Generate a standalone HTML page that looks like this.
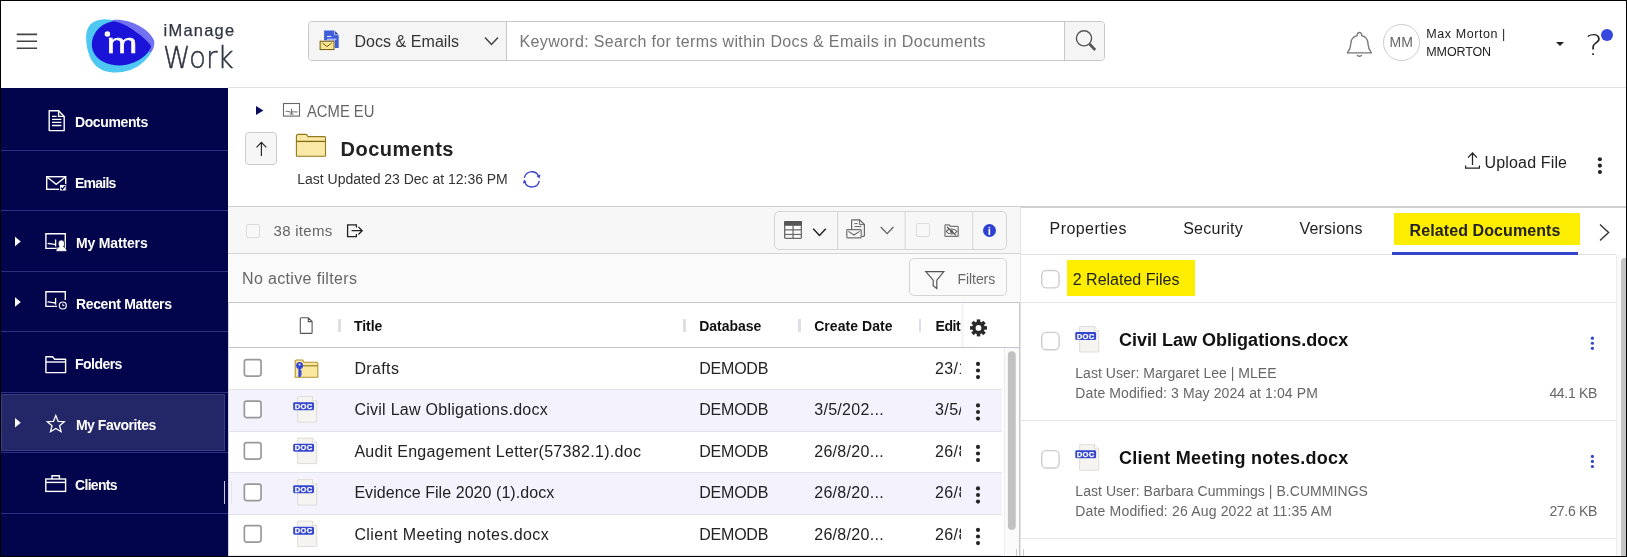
<!DOCTYPE html>
<html lang="en"><head><meta charset="utf-8"><title>iManage Work - Documents</title><style>
html,body{margin:0;padding:0;background:#fff;}
body{width:1627px;height:557px;overflow:hidden;position:relative;font-family:"Liberation Sans",sans-serif;}
#app{position:absolute;left:0;top:0;width:1627px;height:557px;overflow:hidden;background:#fff;}
.t{position:absolute;white-space:nowrap;line-height:1;}
#app{will-change:transform;}
#frame{position:absolute;left:0;top:0;width:1625px;height:555px;border:1px solid #000;pointer-events:none;}
</style></head><body><div id="app">
<div style="position:absolute;left:1px;top:1px;width:1625px;height:86px;background:#fff;"></div>
<div style="position:absolute;left:228px;top:87px;width:1398px;height:1px;background:#e2e2e2;"></div>
<svg style="position:absolute;left:14px;top:30px;" width="26" height="22" viewBox="0 0 26 22"><path d="M2.7 4.4 H23.1 M2.7 11.3 H23.1 M2.7 18.2 H23.1" stroke="#444" stroke-width="1.6" fill="none"/></svg>
<svg style="position:absolute;left:80px;top:12px;" width="84" height="68" viewBox="0 0 84 68"><path d="M6.11,25.64 C5.86,14.65 12.21,7.57 24.42,7.33 C39.07,7.08 63.49,18.32 73.26,30.53 C74.48,40.29 63.49,53.72 48.84,58.61 C36.63,62.27 21.98,61.05 14.65,52.50 C8.55,45.18 6.35,35.41 6.11,25.64 Z" fill="#4fc7f3"/><path d="M32.72,8.06 C48.84,6.35 68.38,15.87 74.11,28.69 C74.97,33.21 73.26,37.24 70.57,40.90 L32.72,9.52 Z" fill="#7271f1"/><path d="M11.84,32.36 C11.60,23.20 18.32,12.21 32.72,9.16 C41.51,9.52 52.50,16.85 61.05,23.81 C65.93,27.84 69.60,31.50 71.18,34.55 C68.38,42.74 58.61,50.31 46.40,52.75 C34.19,54.95 21.98,51.28 15.87,43.96 C12.82,40.29 11.97,36.63 11.84,32.36 Z" fill="#1b14d8"/><circle cx="27.4" cy="22" r="2.75" fill="#fff"/><text transform="translate(26.7,40.8) scale(1.31,1)" font-family="Liberation Sans, sans-serif" font-size="28" fill="#fff" stroke="#fff" stroke-width="0.45" stroke-linejoin="round">m</text></svg>
<span class="t" style="left:163.60px;top:22.00px;font-size:16.5px;color:#2f3542;letter-spacing:1.218px;-webkit-text-stroke:0.25px #2f3542;">iManage</span>
<span class="t" style="left:163.40px;top:43.00px;font-size:30px;color:#2f3542;font-family:'DejaVu Sans','Liberation Sans',sans-serif;font-weight:200;-webkit-text-stroke:0.45px #2f3542;transform:scaleX(0.928);transform-origin:0 0;">Work</span>
<div style="position:absolute;left:308px;top:21px;width:797.4px;height:40px;box-sizing:border-box;border:1px solid #c8c8c8;border-radius:4px;background:#fff;overflow:hidden;"><div style="position:absolute;left:0;top:0;width:196.5px;height:38px;background:#f5f5f5;border-right:1px solid #c8c8c8"></div><div style="position:absolute;left:755.4px;top:0;width:41px;height:38px;background:#f5f5f5;border-left:1px solid #c8c8c8"></div></div>
<svg style="position:absolute;left:319px;top:30px;" width="21" height="21" viewBox="0 0 21 21"><path d="M5.1 0.6 H15.6 L19.7 4.7 V18.1 H5.1Z" fill="#3f5dd8"/><path d="M15.6 0 V4.7 H20.3" fill="none" stroke="#fff" stroke-width="0.7"/><path d="M16 1.4 V4.3 H18.9Z" fill="#2b40b5"/><rect x="8" y="5.9" width="4.3" height="1.1" fill="#e4e9ff"/><rect x="8" y="8.7" width="9.4" height="1.1" fill="#c9d2ff"/><rect x="0.3" y="10.3" width="15.6" height="10.2" fill="#fff"/><rect x="1.1" y="11.2" width="13.9" height="8.4" fill="#fbe58e" stroke="#6b5410" stroke-width="1"/><path d="M3.4 13 L8 16.6 L12.7 13" fill="none" stroke="#6b5410" stroke-width="0.9"/></svg>
<span class="t" style="left:354.50px;top:34.00px;font-size:16px;color:#333;letter-spacing:0.040px;">Docs &amp; Emails</span>
<svg style="position:absolute;left:484px;top:36px;" width="15" height="10" viewBox="0 0 15 10"><path d="M1 1.5 L7.5 8.5 L14 1.5" fill="none" stroke="#444" stroke-width="1.5"/></svg>
<span class="t" style="left:519.50px;top:34.00px;font-size:16px;color:#757575;letter-spacing:0.354px;">Keyword: Search for terms within Docs &amp; Emails in Documents</span>
<svg style="position:absolute;left:1072px;top:26px;" width="28" height="28" viewBox="0 0 28 28"><circle cx="12" cy="12.3" r="7.6" fill="none" stroke="#555" stroke-width="1.4"/><path d="M17.6 18 L23.2 24" stroke="#555" stroke-width="2.6" stroke-linecap="butt"/></svg>
<svg style="position:absolute;left:1340px;top:25px;" width="40" height="37" viewBox="0 0 40 37"><path d="M7.4 27.8 C9.8 24.6 10.7 22.4 10.8 19 C10.9 14.6 12.6 11.6 17.2 10.6 C16.8 8.6 18 7.5 19.4 7.5 C20.8 7.5 22 8.6 21.6 10.6 C26.2 11.6 27.9 14.6 28 19 C28.1 22.4 29 24.6 31.4 27.8 Z" fill="none" stroke="#777" stroke-width="1.35" stroke-linejoin="round"/><path d="M17.4 30.5 Q19.4 31.9 21.4 30.5" fill="none" stroke="#777" stroke-width="1.4" stroke-linecap="round"/></svg>
<div style="position:absolute;left:1383px;top:24px;width:36.5px;height:36.5px;box-sizing:border-box;border:1px solid #ccc;border-radius:50%;background:#fff;"></div>
<span class="t" style="left:1389.60px;top:35.00px;font-size:14px;color:#666;letter-spacing:0.076px;">MM</span>
<span class="t" style="left:1426.30px;top:28.00px;font-size:12.5px;color:#222;letter-spacing:0.572px;">Max Morton |</span>
<span class="t" style="left:1426.30px;top:46.00px;font-size:12.5px;color:#222;letter-spacing:-0.118px;">MMORTON</span>
<svg style="position:absolute;left:1555px;top:41px;" width="10" height="6" viewBox="0 0 10 6"><path d="M1 1 H9 L5 5Z" fill="#222"/></svg>
<span class="t" style="left:1584.60px;top:32.00px;font-size:28px;color:#222;font-family:'DejaVu Sans','Liberation Sans',sans-serif;font-weight:200;transform:scaleX(1.2);transform-origin:0 0;">?</span>
<div style="position:absolute;left:1600.8px;top:29.4px;width:12px;height:12px;border-radius:50%;background:#3547dd;"></div>
<div style="position:absolute;left:1px;top:88px;width:227px;height:468px;background:#03054c;"></div>
<div style="position:absolute;left:1px;top:150px;width:227px;height:1px;background:#2d3080;"></div>
<div style="position:absolute;left:1px;top:210px;width:227px;height:1px;background:#2d3080;"></div>
<div style="position:absolute;left:1px;top:271px;width:227px;height:1px;background:#2d3080;"></div>
<div style="position:absolute;left:1px;top:331px;width:227px;height:1px;background:#2d3080;"></div>
<div style="position:absolute;left:1px;top:391.5px;width:227px;height:1px;background:#2d3080;"></div>
<div style="position:absolute;left:1px;top:452px;width:227px;height:1px;background:#2d3080;"></div>
<div style="position:absolute;left:1px;top:513px;width:227px;height:1px;background:#2d3080;"></div>
<div style="position:absolute;left:1px;top:394px;width:224px;height:57px;box-sizing:border-box;background:#242767;border:1px solid #393d80;"></div>
<div style="position:absolute;left:224px;top:481px;width:1px;height:23px;background:#c9c9d6;"></div>
<span class="t" style="left:74.90px;top:115.00px;font-size:14px;color:#fff;font-weight:700;letter-spacing:-0.367px;">Documents</span>
<span class="t" style="left:75.00px;top:176.00px;font-size:14px;color:#fff;font-weight:700;letter-spacing:-0.768px;">Emails</span>
<span class="t" style="left:75.90px;top:236.00px;font-size:14px;color:#fff;font-weight:700;letter-spacing:-0.148px;">My Matters</span>
<span class="t" style="left:75.90px;top:297.00px;font-size:14px;color:#fff;font-weight:700;letter-spacing:-0.328px;">Recent Matters</span>
<span class="t" style="left:75.00px;top:357.00px;font-size:14px;color:#fff;font-weight:700;letter-spacing:-0.528px;">Folders</span>
<span class="t" style="left:75.90px;top:418.00px;font-size:14px;color:#fff;font-weight:700;letter-spacing:-0.471px;">My Favorites</span>
<span class="t" style="left:75.00px;top:478.00px;font-size:14px;color:#fff;font-weight:700;letter-spacing:-0.679px;">Clients</span>
<svg style="position:absolute;left:15px;top:236px;" width="7" height="11" viewBox="0 0 7 11"><g transform="translate(0 0.5)"><path d="M0 0.3 L5.8 5 L0 9.7Z" fill="#fff"/></g></svg>
<svg style="position:absolute;left:15px;top:297px;" width="6" height="10" viewBox="0 0 6 10"><path d="M0 0.3 L5.8 5 L0 9.7Z" fill="#fff"/></svg>
<svg style="position:absolute;left:15px;top:417px;" width="7" height="11" viewBox="0 0 7 11"><g transform="translate(0 0.7)"><path d="M0 0.3 L5.8 5 L0 9.7Z" fill="#fff"/></g></svg>
<svg style="position:absolute;left:47px;top:109px;" width="20" height="24" viewBox="0 0 20 24"><path d="M2.2 1.8 H11.6 L17.2 7.4 V21.6 H2.2Z" fill="none" stroke="#fff" stroke-width="1.4" stroke-linejoin="round"/><path d="M11.6 1.8 V7.4 H17.2" fill="none" stroke="#fff" stroke-width="1.4"/><path d="M5 7.4 H9.6 M5 10.4 H14.4 M5 13.4 H14.4 M5 16.5 H14.4" stroke="#fff" stroke-width="1.3"/></svg>
<svg style="position:absolute;left:45px;top:175px;" width="24" height="17" viewBox="0 0 24 17"><rect x="1.7" y="1.7" width="19" height="12.6" fill="none" stroke="#fff" stroke-width="1.4"/><path d="M2 2 L11.2 9.4 L20.4 2" fill="none" stroke="#fff" stroke-width="1.4"/><rect x="14.6" y="9.4" width="6.6" height="6.6" fill="#fff" stroke="#03054c" stroke-width="1"/><path d="M16 12.6 L17.4 14.2 L20 10.8" fill="none" stroke="#03054c" stroke-width="1.2"/></svg>
<svg style="position:absolute;left:44px;top:232px;" width="24" height="20" viewBox="0 0 24 20"><path d="M1.9 1.7 H21.3 V16.4 H1.9Z" fill="none" stroke="#fff" stroke-width="1.4"/><path d="M3.6 11.6 C6.4 11 8.6 13 11.4 12.2 M11.6 7.6 V14.4" fill="none" stroke="#fff" stroke-width="1.3"/><path d="M12 19.4 C12.2 15.8 14.2 15.6 15.2 14.8 C13.6 12.6 14 8 17.4 8 C20.8 8 21.2 12.6 19.6 14.8 C20.6 15.6 22.6 15.8 22.8 19.4Z" fill="#fff" stroke="#03054c" stroke-width="0.7"/></svg>
<svg style="position:absolute;left:44px;top:290px;" width="24" height="21" viewBox="0 0 24 21"><path d="M21.3 10 V1.7 H1.9 V16.4 H13" fill="none" stroke="#fff" stroke-width="1.4"/><path d="M3.6 12 C6.4 11.4 8.6 13.4 11.4 12.6 M11.6 8 V14.8" fill="none" stroke="#fff" stroke-width="1.3"/><circle cx="18.8" cy="15.5" r="3.5" fill="#03054c" stroke="#fff" stroke-width="1.2"/><path d="M18.8 13.6 V15.7 H20.4" fill="none" stroke="#fff" stroke-width="1"/></svg>
<svg style="position:absolute;left:44px;top:355px;" width="24" height="20" viewBox="0 0 24 20"><path d="M1.9 17.6 V1.8 H8.6 L10.6 4.2 H21.6 V17.6Z" fill="none" stroke="#fff" stroke-width="1.4" stroke-linejoin="round"/><path d="M1.9 7 H21.6" fill="none" stroke="#fff" stroke-width="1.4"/></svg>
<svg style="position:absolute;left:45px;top:413px;" width="22" height="21" viewBox="0 0 22 21"><path transform="translate(10.8 10.9) scale(0.9) translate(-11 -10.9)" d="M11 1.6 L13.6 8 L20.4 8.5 L15.2 12.9 L16.9 19.6 L11 15.9 L5.1 19.6 L6.8 12.9 L1.6 8.5 L8.4 8Z" fill="none" stroke="#fff" stroke-width="1.4" stroke-linejoin="miter"/></svg>
<svg style="position:absolute;left:44px;top:474px;" width="24" height="19" viewBox="0 0 24 19"><rect x="1.8" y="5" width="19.8" height="12.4" fill="none" stroke="#fff" stroke-width="1.4"/><path d="M8 5 V1.8 H15.4 V5" fill="none" stroke="#fff" stroke-width="1.4"/><path d="M1.8 8.4 H21.6" fill="none" stroke="#fff" stroke-width="1.4"/></svg>
<svg style="position:absolute;left:255px;top:105px;" width="9" height="11" viewBox="0 0 9 11"><path d="M1 1 L8.4 5.5 L1 10Z" fill="#0b0b5e"/></svg>
<svg style="position:absolute;left:282px;top:102px;" width="19" height="16" viewBox="0 0 19 16"><rect x="1.5" y="1.5" width="16" height="12.6" fill="#fff" stroke="#666" stroke-width="1.1"/><path d="M3.6 9.4 C6 8.8 8 10.6 10 10 C12 9.4 13.6 10.4 15.6 9.8 M9.6 6.6 V12 M7.8 12.1 H11.6" fill="none" stroke="#666" stroke-width="1"/></svg>
<span class="t" style="left:307.20px;top:104.00px;font-size:16px;color:#666;transform:scaleX(0.925);transform-origin:0 0;">ACME EU</span>
<div style="position:absolute;left:245px;top:132px;width:32px;height:32.5px;box-sizing:border-box;border:1px solid #ccc;border-radius:4px;background:#f6f6f6;"></div>
<svg style="position:absolute;left:254px;top:140px;" width="15" height="18" viewBox="0 0 15 18"><path d="M7.4 16 V2.6 M2.5 7.4 L7.4 2.4 L12.3 7.4" fill="none" stroke="#222" stroke-width="1.15"/></svg>
<svg style="position:absolute;left:295px;top:133px;" width="33" height="25" viewBox="0 0 33 25"><path d="M1.4 22.8 V3.4 Q1.4 1.4 3.4 1.4 H10.4 Q11.6 1.4 12.2 2.4 L13 3.6 H29.4 Q30.5 3.6 30.5 4.8 V22.8 Q30.5 23.3 29.9 23.3 H2 Q1.4 23.3 1.4 22.8Z" fill="#fae9a6" stroke="#937719" stroke-width="1.1"/><path d="M1.4 8.4 H30.5" stroke="#866b14" stroke-width="1.3"/></svg>
<span class="t" style="left:340.60px;top:139.00px;font-size:20px;color:#222;font-weight:700;letter-spacing:0.487px;">Documents</span>
<span class="t" style="left:297.30px;top:172.00px;font-size:14px;color:#333;letter-spacing:-0.014px;">Last Updated 23 Dec at 12:36 PM</span>
<svg style="position:absolute;left:521px;top:169px;" width="22" height="21" viewBox="0 0 22 21"><path d="M3.37 8.82 A7.6 7.6 0 0 1 17.51 6.83" fill="none" stroke="#3d43cc" stroke-width="1.35"/><path d="M18.27 11.8 A7.6 7.6 0 0 1 3.86 13.49" fill="none" stroke="#3d43cc" stroke-width="1.35"/><path d="M18.55 9.6 L19.5 5.6 L15.5 7.1Z" fill="#3d43cc"/><path d="M3.0 10.5 L1.85 14.4 L5.8 13.3Z" fill="#3d43cc"/></svg>
<svg style="position:absolute;left:1464px;top:151px;" width="17" height="19" viewBox="0 0 17 19"><path d="M8.5 14 V2.2 M4 6.6 L8.5 2 L13 6.6" fill="none" stroke="#222" stroke-width="1.25"/><path d="M1.6 14.4 V17 H15.4 V14.4" fill="none" stroke="#222" stroke-width="1.25"/></svg>
<span class="t" style="left:1484.60px;top:155.00px;font-size:16px;color:#222;letter-spacing:0.147px;">Upload File</span>
<svg style="position:absolute;left:1595px;top:155px;" width="10" height="22" viewBox="0 0 10 22"><circle cx="4.9" cy="4.2" r="2.05" fill="#222"/><circle cx="4.9" cy="10.6" r="2.05" fill="#222"/><circle cx="4.9" cy="17" r="2.05" fill="#222"/></svg>
<div style="position:absolute;left:228px;top:206px;width:1398px;height:1px;background:#cfcfcf;"></div>
<div style="position:absolute;left:228px;top:207px;width:792px;height:46px;background:#f7f7f7;"></div>
<div style="position:absolute;left:228px;top:253px;width:792px;height:1px;background:#d4d4d4;"></div>
<div style="position:absolute;left:228px;top:254px;width:792px;height:48px;background:#fafafa;"></div>
<div style="position:absolute;left:1020px;top:207px;width:1px;height:95px;background:#e4e4e4;"></div>
<div style="position:absolute;left:246px;top:224px;width:13.5px;height:13.5px;box-sizing:border-box;border:1px solid #dcdcdc;border-radius:2px;background:#f8f8f8;"></div>
<span class="t" style="left:273.60px;top:223.00px;font-size:15px;color:#666;letter-spacing:0.273px;">38 items</span>
<svg style="position:absolute;left:346px;top:223px;" width="18" height="16" viewBox="0 0 18 16"><path d="M10.4 4.4 V1.8 H1.6 V13.6 H10.4 V11" fill="none" stroke="#222" stroke-width="1.3"/><path d="M5.6 7.7 H16 M12.4 3.9 L16.2 7.7 L12.4 11.5" fill="none" stroke="#222" stroke-width="1.3"/></svg>
<div style="position:absolute;left:774px;top:211px;width:232.5px;height:38.5px;box-sizing:border-box;border:1px solid #d4d4d4;border-radius:5px;background:#f7f7f7;"></div>
<svg style="position:absolute;left:774px;top:211px;" width="233" height="39" viewBox="0 0 233 39"><rect x="63.1" y="0.5" width="1" height="38" fill="#d4d4d4"/><rect x="130.6" y="0.5" width="1" height="38" fill="#d4d4d4"/><rect x="198.3" y="0.5" width="1" height="38" fill="#d4d4d4"/></svg>
<svg style="position:absolute;left:783px;top:220px;" width="20" height="20" viewBox="0 0 20 20"><rect x="1" y="1" width="18" height="18" rx="1.4" fill="#6c6c6c"/><path d="M1 2.4 Q1 1 2.4 1 H17.6 Q19 1 19 2.4 V5.2 H1Z" fill="#555"/><rect x="2.4" y="5.9" width="7" height="3.3" fill="#fff"/><rect x="10.7" y="5.9" width="7" height="3.3" fill="#fff"/><rect x="2.4" y="10.5" width="7" height="3.3" fill="#fff"/><rect x="10.7" y="10.5" width="7" height="3.3" fill="#fff"/><rect x="2.4" y="15.1" width="7" height="2.6" fill="#fff"/><rect x="10.7" y="15.1" width="7" height="2.6" fill="#fff"/></svg>
<svg style="position:absolute;left:812px;top:227px;" width="15" height="10" viewBox="0 0 15 10"><path d="M1.2 1.8 L7.5 8.4 L13.8 1.8" fill="none" stroke="#222" stroke-width="1.5"/></svg>
<svg style="position:absolute;left:845px;top:218px;" width="22" height="22" viewBox="0 0 22 22"><path d="M6.6 11 V2.6 Q6.6 1.8 7.4 1.8 H14.6 L19.4 6.6 V17.6 Q19.4 18.4 18.6 18.4 H16.6" fill="none" stroke="#666" stroke-width="1.2"/><path d="M14.6 1.8 V6.6 H19.4" fill="none" stroke="#666" stroke-width="1"/><path d="M9.4 5.6 H12.6 M9.4 8.6 H16.4" stroke="#666" stroke-width="1"/><rect x="1.8" y="11.6" width="14.4" height="8.2" rx="0.8" fill="#f7f7f7" stroke="#707070" stroke-width="1.2"/><path d="M3.4 13.4 L9 17 L14.6 13.4" fill="none" stroke="#666" stroke-width="1.1"/></svg>
<svg style="position:absolute;left:879px;top:225px;" width="16" height="11" viewBox="0 0 16 11"><path d="M1.8 2.0 L8.1 8.6 L14.4 2.0" fill="none" stroke="#606060" stroke-width="1.3"/></svg>
<div style="position:absolute;left:916px;top:223.2px;width:13.8px;height:13.8px;box-sizing:border-box;border:1px solid #dcdcdc;border-radius:2px;background:#f8f8f8;"></div>
<svg style="position:absolute;left:943px;top:223px;" width="18" height="15.5" viewBox="0 0 18 15.5"><g transform="translate(0.4 0.2)"><path d="M1.6 12.6 V2.4 Q1.6 1.6 2.4 1.6 H5.6 L7 3.2 H14 Q14.8 3.2 14.8 4 V12.6 Q14.8 13.2 14.2 13.2 H2.2 Q1.6 13.2 1.6 12.6Z" fill="none" stroke="#7a7a7a" stroke-width="1.3" stroke-linejoin="round"/><path d="M2.9 8.3 C5.2 4.9 11.2 4.9 13.6 8.3 C11.2 11.5 5.2 11.5 2.9 8.3Z" fill="none" stroke="#555" stroke-width="1.05"/><circle cx="8.2" cy="8.2" r="1.5" fill="#555"/><path d="M3.6 3.8 L12.6 12.2" stroke="#555" stroke-width="1.05"/></g></svg>
<div style="position:absolute;left:982.7px;top:223.9px;width:13.2px;height:13.2px;border-radius:50%;background:#2f40d2;"></div>
<span class="t" style="left:987.75px;top:226.00px;font-size:11.5px;color:#fff;font-weight:700;">i</span>
<span class="t" style="left:242.00px;top:271.00px;font-size:16px;color:#666;letter-spacing:0.352px;">No active filters</span>
<div style="position:absolute;left:909px;top:258px;width:98px;height:38px;box-sizing:border-box;border:1px solid #d4d4d4;border-radius:5px;background:#fafafa;"></div>
<svg style="position:absolute;left:924px;top:269px;" width="23" height="22" viewBox="0 0 23 22"><g transform="translate(0 0.8)"><path d="M1.8 1.8 H19.8 L12.8 10.4 V18.6 L9.2 15.8 V10.4Z" fill="none" stroke="#555" stroke-width="1.2" stroke-linejoin="miter"/></g></svg>
<span class="t" style="left:957.60px;top:272.00px;font-size:14px;color:#666;letter-spacing:-0.085px;">Filters</span>
<div style="position:absolute;left:229px;top:302px;width:791px;height:254px;background:#fff;"></div>
<div style="position:absolute;left:229px;top:302px;width:791px;height:1px;background:#c6c6d2;"></div>
<div style="position:absolute;left:228px;top:302px;width:1px;height:254px;background:#d2d2e4;"></div>
<div style="position:absolute;left:1019px;top:302px;width:1px;height:254px;background:#c6c6cc;"></div>
<div style="position:absolute;left:1020px;top:302px;width:1px;height:254px;background:#e6e6e6;"></div>
<div style="position:absolute;left:229px;top:347px;width:790px;height:1px;background:#c4c4d0;"></div>
<svg style="position:absolute;left:298px;top:316px;" width="17" height="20" viewBox="0 0 17 20"><g transform="translate(0.5 0.2)"><path d="M1.8 2.6 Q1.8 1.6 2.8 1.6 H9.8 L13.6 5.4 V16.2 Q13.6 17.2 12.6 17.2 H2.8 Q1.8 17.2 1.8 16.2Z M9.8 1.6 V5.4 H13.6" fill="none" stroke="#555" stroke-width="1.1"/></g></svg>
<div style="position:absolute;left:338px;top:319px;width:3px;height:13px;background:#dedee6;"></div>
<div style="position:absolute;left:683px;top:319px;width:3px;height:13px;background:#dedee6;"></div>
<div style="position:absolute;left:798.4px;top:319px;width:3px;height:13px;background:#dedee6;"></div>
<div style="position:absolute;left:919.4px;top:319px;width:1.6px;height:13px;background:#dedee6;"></div>
<span class="t" style="left:354.00px;top:319.00px;font-size:14px;color:#111;font-weight:700;letter-spacing:-0.032px;">Title</span>
<span class="t" style="left:699.20px;top:319.00px;font-size:14px;color:#111;font-weight:700;letter-spacing:-0.008px;">Database</span>
<span class="t" style="left:814.20px;top:319.00px;font-size:14px;color:#111;font-weight:700;letter-spacing:0.049px;">Create Date</span>
<svg style="position:absolute;left:242px;top:356px;" width="23" height="23" viewBox="0 0 23 23"><g transform="translate(0 0.8)"><rect x="2.35" y="2.85" width="16.7" height="16.4" rx="2.2" fill="#fff" stroke="#999" stroke-width="1.7"/></g></svg>
<svg style="position:absolute;left:294px;top:358px;" width="26" height="21" viewBox="0 0 26 21"><g transform="translate(0 0.6)"><path d="M1.2 18.6 V2.6 Q1.2 1.4 2.4 1.4 H8.6 L10 3.6 H22.8 Q23.8 3.6 23.8 4.6 V18.6Z" fill="#fbe8a0" stroke="#b39330" stroke-width="1.1"/><path d="M8 7.2 H23.8" stroke="#9c7f25" stroke-width="1.2"/><circle cx="5.6" cy="6.8" r="3.5" fill="#3148dc"/><circle cx="5.6" cy="5.8" r="1" fill="#fbe8a0"/><path d="M5.5 9 V18.4 M5.5 13 H7.6 M5.5 15.8 H7.6" stroke="#3148dc" stroke-width="2.3"/></g></svg>
<span class="t" style="left:354.40px;top:361.00px;font-size:16px;color:#222;letter-spacing:0.366px;">Drafts</span>
<span class="t" style="left:699.20px;top:361.00px;font-size:16px;color:#222;letter-spacing:-0.205px;">DEMODB</span>
<div style="position:absolute;left:229px;top:389px;width:773px;height:41.5px;background:#f3f2fd;"></div>
<div style="position:absolute;left:229px;top:389px;width:773px;height:1px;background:#e2e2ec;"></div>
<svg style="position:absolute;left:242px;top:398px;" width="23" height="23" viewBox="0 0 23 23"><g transform="translate(0 0.3)"><rect x="2.35" y="2.85" width="16.7" height="16.4" rx="2.2" fill="#fff" stroke="#999" stroke-width="1.7"/></g></svg>
<svg style="position:absolute;left:292px;top:395px;" width="27" height="29" viewBox="0 0 27 29"><g transform="translate(0.3 0.9)"><path d="M5.3 0.7 H20.2 L24.4 4.9 V26.2 H5.3Z" fill="#f6f4f1" stroke="#dcd9d4" stroke-width="0.9"/><path d="M20.2 0.7 V4.9 H24.4" fill="#fff" stroke="#d6d3ce" stroke-width="0.8"/><rect x="0.9" y="6.3" width="20.8" height="8" rx="1.4" fill="#3446cf"/><text x="11.3" y="13.1" text-anchor="middle" font-family="Liberation Sans, sans-serif" font-weight="700" font-size="7.6" fill="#fff" stroke="#fff" stroke-width="0.25" letter-spacing="0.35">DOC</text></g></svg>
<span class="t" style="left:354.40px;top:402.00px;font-size:16px;color:#222;letter-spacing:0.266px;">Civil Law Obligations.docx</span>
<span class="t" style="left:699.20px;top:402.00px;font-size:16px;color:#222;letter-spacing:-0.205px;">DEMODB</span>
<span class="t" style="left:814.20px;top:402.00px;font-size:16px;color:#222;letter-spacing:0.298px;">3/5/202...</span>
<div style="position:absolute;left:229px;top:430.5px;width:773px;height:1px;background:#e2e2ec;"></div>
<svg style="position:absolute;left:242px;top:439px;" width="23" height="23" viewBox="0 0 23 23"><g transform="translate(0 0.8)"><rect x="2.35" y="2.85" width="16.7" height="16.4" rx="2.2" fill="#fff" stroke="#999" stroke-width="1.7"/></g></svg>
<svg style="position:absolute;left:292px;top:437px;" width="27" height="29" viewBox="0 0 27 29"><g transform="translate(0.3 0.4)"><path d="M5.3 0.7 H20.2 L24.4 4.9 V26.2 H5.3Z" fill="#f6f4f1" stroke="#dcd9d4" stroke-width="0.9"/><path d="M20.2 0.7 V4.9 H24.4" fill="#fff" stroke="#d6d3ce" stroke-width="0.8"/><rect x="0.9" y="6.3" width="20.8" height="8" rx="1.4" fill="#3446cf"/><text x="11.3" y="13.1" text-anchor="middle" font-family="Liberation Sans, sans-serif" font-weight="700" font-size="7.6" fill="#fff" stroke="#fff" stroke-width="0.25" letter-spacing="0.35">DOC</text></g></svg>
<span class="t" style="left:354.40px;top:444.00px;font-size:16px;color:#222;letter-spacing:0.310px;">Audit Engagement Letter(57382.1).doc</span>
<span class="t" style="left:699.20px;top:444.00px;font-size:16px;color:#222;letter-spacing:-0.205px;">DEMODB</span>
<span class="t" style="left:814.20px;top:444.00px;font-size:16px;color:#222;letter-spacing:0.298px;">26/8/20...</span>
<div style="position:absolute;left:229px;top:472px;width:773px;height:41.5px;background:#f3f2fd;"></div>
<div style="position:absolute;left:229px;top:472px;width:773px;height:1px;background:#e2e2ec;"></div>
<svg style="position:absolute;left:242px;top:481px;" width="23" height="23" viewBox="0 0 23 23"><g transform="translate(0 0.3)"><rect x="2.35" y="2.85" width="16.7" height="16.4" rx="2.2" fill="#fff" stroke="#999" stroke-width="1.7"/></g></svg>
<svg style="position:absolute;left:292px;top:478px;" width="27" height="29" viewBox="0 0 27 29"><g transform="translate(0.3 0.9)"><path d="M5.3 0.7 H20.2 L24.4 4.9 V26.2 H5.3Z" fill="#f6f4f1" stroke="#dcd9d4" stroke-width="0.9"/><path d="M20.2 0.7 V4.9 H24.4" fill="#fff" stroke="#d6d3ce" stroke-width="0.8"/><rect x="0.9" y="6.3" width="20.8" height="8" rx="1.4" fill="#3446cf"/><text x="11.3" y="13.1" text-anchor="middle" font-family="Liberation Sans, sans-serif" font-weight="700" font-size="7.6" fill="#fff" stroke="#fff" stroke-width="0.25" letter-spacing="0.35">DOC</text></g></svg>
<span class="t" style="left:354.40px;top:485.00px;font-size:16px;color:#222;letter-spacing:0.057px;">Evidence File 2020 (1).docx</span>
<span class="t" style="left:699.20px;top:485.00px;font-size:16px;color:#222;letter-spacing:-0.205px;">DEMODB</span>
<span class="t" style="left:814.20px;top:485.00px;font-size:16px;color:#222;letter-spacing:0.298px;">26/8/20...</span>
<div style="position:absolute;left:229px;top:513.5px;width:773px;height:1px;background:#e2e2ec;"></div>
<svg style="position:absolute;left:242px;top:522px;" width="23" height="23" viewBox="0 0 23 23"><g transform="translate(0 0.8)"><rect x="2.35" y="2.85" width="16.7" height="16.4" rx="2.2" fill="#fff" stroke="#999" stroke-width="1.7"/></g></svg>
<svg style="position:absolute;left:292px;top:520px;" width="27" height="29" viewBox="0 0 27 29"><g transform="translate(0.3 0.4)"><path d="M5.3 0.7 H20.2 L24.4 4.9 V26.2 H5.3Z" fill="#f6f4f1" stroke="#dcd9d4" stroke-width="0.9"/><path d="M20.2 0.7 V4.9 H24.4" fill="#fff" stroke="#d6d3ce" stroke-width="0.8"/><rect x="0.9" y="6.3" width="20.8" height="8" rx="1.4" fill="#3446cf"/><text x="11.3" y="13.1" text-anchor="middle" font-family="Liberation Sans, sans-serif" font-weight="700" font-size="7.6" fill="#fff" stroke="#fff" stroke-width="0.25" letter-spacing="0.35">DOC</text></g></svg>
<span class="t" style="left:354.40px;top:527.00px;font-size:16px;color:#222;letter-spacing:0.429px;">Client Meeting notes.docx</span>
<span class="t" style="left:699.20px;top:527.00px;font-size:16px;color:#222;letter-spacing:-0.205px;">DEMODB</span>
<span class="t" style="left:814.20px;top:527.00px;font-size:16px;color:#222;letter-spacing:0.298px;">26/8/20...</span>
<div style="position:absolute;left:930px;top:303px;width:31.4px;height:253px;overflow:hidden;background:transparent;"><span class="t" style="left:5px;top:58px;font-size:16px;color:#222;letter-spacing:0.4px">23/1</span><span class="t" style="left:5px;top:99px;font-size:16px;color:#222;letter-spacing:0.4px">3/5/</span><span class="t" style="left:5px;top:141px;font-size:16px;color:#222;letter-spacing:0.4px">26/8</span><span class="t" style="left:5px;top:182px;font-size:16px;color:#222;letter-spacing:0.4px">26/8</span><span class="t" style="left:5px;top:224px;font-size:16px;color:#222;letter-spacing:0.4px">26/8</span><span class="t" style="left:5.4px;top:16px;font-size:14px;font-weight:700;color:#111;letter-spacing:-0.35px">Edit Date</span></div>
<div style="position:absolute;left:961.3px;top:303px;width:2.5px;height:44px;background:#f5f5fa;"></div>
<svg style="position:absolute;left:968px;top:317px;" width="21" height="21" viewBox="0 0 21 21"><g transform="translate(0.5 0.9)"><g transform="translate(10,10)" fill="#2a2a2a"><rect x="-1.75" y="-8.5" width="3.5" height="4" transform="rotate(0)"/><rect x="-1.75" y="-8.5" width="3.5" height="4" transform="rotate(45)"/><rect x="-1.75" y="-8.5" width="3.5" height="4" transform="rotate(90)"/><rect x="-1.75" y="-8.5" width="3.5" height="4" transform="rotate(135)"/><rect x="-1.75" y="-8.5" width="3.5" height="4" transform="rotate(180)"/><rect x="-1.75" y="-8.5" width="3.5" height="4" transform="rotate(225)"/><rect x="-1.75" y="-8.5" width="3.5" height="4" transform="rotate(270)"/><rect x="-1.75" y="-8.5" width="3.5" height="4" transform="rotate(315)"/><circle r="6.3"/></g><circle cx="10" cy="10" r="2.9" fill="#fff"/></g></svg>
<svg style="position:absolute;left:973px;top:360px;" width="11" height="21" viewBox="0 0 11 21"><g transform="translate(0 0.5)"><circle cx="5" cy="3.4" r="2.05" fill="#222"/><circle cx="5" cy="10" r="2.05" fill="#222"/><circle cx="5" cy="16.6" r="2.05" fill="#222"/></g></svg>
<svg style="position:absolute;left:973px;top:402px;" width="10" height="20" viewBox="0 0 10 20"><circle cx="5" cy="3.4" r="2.05" fill="#222"/><circle cx="5" cy="10" r="2.05" fill="#222"/><circle cx="5" cy="16.6" r="2.05" fill="#222"/></svg>
<svg style="position:absolute;left:973px;top:443px;" width="11" height="21" viewBox="0 0 11 21"><g transform="translate(0 0.5)"><circle cx="5" cy="3.4" r="2.05" fill="#222"/><circle cx="5" cy="10" r="2.05" fill="#222"/><circle cx="5" cy="16.6" r="2.05" fill="#222"/></g></svg>
<svg style="position:absolute;left:973px;top:485px;" width="10" height="20" viewBox="0 0 10 20"><circle cx="5" cy="3.4" r="2.05" fill="#222"/><circle cx="5" cy="10" r="2.05" fill="#222"/><circle cx="5" cy="16.6" r="2.05" fill="#222"/></svg>
<svg style="position:absolute;left:973px;top:526px;" width="11" height="21" viewBox="0 0 11 21"><g transform="translate(0 0.5)"><circle cx="5" cy="3.4" r="2.05" fill="#222"/><circle cx="5" cy="10" r="2.05" fill="#222"/><circle cx="5" cy="16.6" r="2.05" fill="#222"/></g></svg>
<div style="position:absolute;left:229px;top:555px;width:773px;height:1px;background:#e6e6ee;"></div>
<div style="position:absolute;left:1004px;top:348px;width:15px;height:208px;background:#fafafa;"></div>
<div style="position:absolute;left:1004px;top:348px;width:1px;height:208px;background:#ededed;"></div>
<svg style="position:absolute;left:1006px;top:350px;" width="12" height="182" viewBox="0 0 12 182"><rect x="1.9" y="1.2" width="7.8" height="178.6" rx="3.9" fill="#c1c1c1"/></svg>
<div style="position:absolute;left:231px;top:481px;width:1px;height:23px;background:#e4e4ea;"></div>
<div style="position:absolute;left:1016px;top:549px;width:1px;height:7px;background:#cdcdcd;"></div>
<div style="position:absolute;left:1023px;top:549px;width:1px;height:7px;background:#cdcdcd;"></div>
<div style="position:absolute;left:1021px;top:207px;width:605px;height:349px;background:#fff;"></div>
<div style="position:absolute;left:1021px;top:206px;width:605px;height:2px;background:#cecece;"></div>
<span class="t" style="left:1049.60px;top:221.00px;font-size:16px;color:#222;letter-spacing:0.431px;">Properties</span>
<span class="t" style="left:1183.20px;top:221.00px;font-size:16px;color:#222;letter-spacing:0.258px;">Security</span>
<span class="t" style="left:1299.40px;top:221.00px;font-size:16px;color:#222;letter-spacing:0.233px;">Versions</span>
<div style="position:absolute;left:1394px;top:213.2px;width:186px;height:32.2px;background:#fdee00;"></div>
<span class="t" style="left:1409.60px;top:223.00px;font-size:16px;color:#222;font-weight:700;letter-spacing:0.090px;">Related Documents</span>
<div style="position:absolute;left:1021px;top:254px;width:595px;height:1px;background:#e0e0e0;"></div>
<div style="position:absolute;left:1392.2px;top:251.8px;width:185.8px;height:3px;background:#3344cc;"></div>
<svg style="position:absolute;left:1597px;top:222px;" width="15" height="21" viewBox="0 0 15 21"><path d="M3 2.6 L11.6 10.5 L3 18.4" fill="none" stroke="#333" stroke-width="1.4"/></svg>
<svg style="position:absolute;left:1039px;top:267px;" width="25" height="25" viewBox="0 0 25 25"><g transform="translate(0 0.8)"><rect x="2.7" y="2.7" width="17.4" height="17.4" rx="4.6" fill="#fff" stroke="#cdcdcd" stroke-width="1.4"/></g></svg>
<div style="position:absolute;left:1067.2px;top:260.3px;width:127.6px;height:36.2px;background:#fdee00;"></div>
<span class="t" style="left:1072.80px;top:272.00px;font-size:16px;color:#222;letter-spacing:-0.009px;">2 Related Files</span>
<div style="position:absolute;left:1021px;top:302px;width:595px;height:1px;background:#e4e4e4;"></div>
<svg style="position:absolute;left:1039px;top:329px;" width="25" height="25" viewBox="0 0 25 25"><g transform="translate(0 0.7)"><rect x="2.7" y="2.7" width="17.4" height="17.4" rx="4.6" fill="#fff" stroke="#cdcdcd" stroke-width="1.4"/></g></svg>
<svg style="position:absolute;left:1074px;top:325px;" width="27" height="29" viewBox="0 0 27 29"><g transform="translate(0.4 0.8)"><path d="M5.3 0.7 H20.2 L24.4 4.9 V26.2 H5.3Z" fill="#f6f4f1" stroke="#dcd9d4" stroke-width="0.9"/><path d="M20.2 0.7 V4.9 H24.4" fill="#fff" stroke="#d6d3ce" stroke-width="0.8"/><rect x="0.9" y="6.3" width="20.8" height="8" rx="1.4" fill="#3446cf"/><text x="11.3" y="13.1" text-anchor="middle" font-family="Liberation Sans, sans-serif" font-weight="700" font-size="7.6" fill="#fff" stroke="#fff" stroke-width="0.25" letter-spacing="0.35">DOC</text></g></svg>
<span class="t" style="left:1119.00px;top:331.00px;font-size:18px;color:#111;font-weight:700;letter-spacing:0.007px;">Civil Law Obligations.docx</span>
<span class="t" style="left:1075.30px;top:366.00px;font-size:14px;color:#666;letter-spacing:0.024px;">Last User: Margaret Lee | MLEE</span>
<span class="t" style="left:1075.30px;top:386.00px;font-size:14px;color:#666;letter-spacing:0.103px;">Date Modified: 3 May 2024 at 1:04 PM</span>
<span class="t" style="left:1549.40px;top:386.00px;font-size:14px;color:#666;letter-spacing:-0.302px;">44.1 KB</span>
<svg style="position:absolute;left:1587px;top:333px;" width="11" height="21" viewBox="0 0 11 21"><g transform="translate(0.4 0.2)"><circle cx="5" cy="5" r="1.6" fill="#3344cc"/><circle cx="5" cy="10.05" r="1.6" fill="#3344cc"/><circle cx="5" cy="15.1" r="1.6" fill="#3344cc"/></g></svg>
<div style="position:absolute;left:1021px;top:420px;width:595px;height:1px;background:#e6e6e6;"></div>
<svg style="position:absolute;left:1039px;top:447px;" width="25" height="25" viewBox="0 0 25 25"><g transform="translate(0 0.9)"><rect x="2.7" y="2.7" width="17.4" height="17.4" rx="4.6" fill="#fff" stroke="#cdcdcd" stroke-width="1.4"/></g></svg>
<svg style="position:absolute;left:1074px;top:444px;" width="27" height="29" viewBox="0 0 27 29"><g transform="translate(0.4 0.0)"><path d="M5.3 0.7 H20.2 L24.4 4.9 V26.2 H5.3Z" fill="#f6f4f1" stroke="#dcd9d4" stroke-width="0.9"/><path d="M20.2 0.7 V4.9 H24.4" fill="#fff" stroke="#d6d3ce" stroke-width="0.8"/><rect x="0.9" y="6.3" width="20.8" height="8" rx="1.4" fill="#3446cf"/><text x="11.3" y="13.1" text-anchor="middle" font-family="Liberation Sans, sans-serif" font-weight="700" font-size="7.6" fill="#fff" stroke="#fff" stroke-width="0.25" letter-spacing="0.35">DOC</text></g></svg>
<span class="t" style="left:1119.00px;top:449.00px;font-size:18px;color:#111;font-weight:700;letter-spacing:0.262px;">Client Meeting notes.docx</span>
<span class="t" style="left:1075.30px;top:484.00px;font-size:14px;color:#666;letter-spacing:0.049px;">Last User: Barbara Cummings | B.CUMMINGS</span>
<span class="t" style="left:1075.30px;top:504.00px;font-size:14px;color:#666;letter-spacing:0.169px;">Date Modified: 26 Aug 2022 at 11:35 AM</span>
<span class="t" style="left:1549.40px;top:504.00px;font-size:14px;color:#666;letter-spacing:-0.302px;">27.6 KB</span>
<svg style="position:absolute;left:1587px;top:451px;" width="11" height="21" viewBox="0 0 11 21"><g transform="translate(0.4 0.4)"><circle cx="5" cy="5" r="1.6" fill="#3344cc"/><circle cx="5" cy="10.05" r="1.6" fill="#3344cc"/><circle cx="5" cy="15.1" r="1.6" fill="#3344cc"/></g></svg>
<div style="position:absolute;left:1021px;top:538px;width:595px;height:1px;background:#e6e6e6;"></div>
<div style="position:absolute;left:1023px;top:549px;width:1px;height:7px;background:#cdcdcd;"></div>
<div style="position:absolute;left:1616px;top:255px;width:10px;height:301px;background:#fafafa;"></div>
<div style="position:absolute;left:1616px;top:255px;width:1px;height:301px;background:#ededed;"></div>
<div style="position:absolute;left:1620.5px;top:258px;width:8px;height:310px;border-radius:4px;background:#c4c4c4;"></div>
<div id="frame"></div></div></body></html>
